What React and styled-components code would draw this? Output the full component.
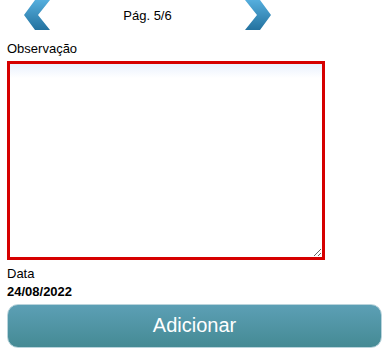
import React from "react"
import styled, { createGlobalStyle } from "styled-components"

const GlobalStyle = createGlobalStyle`
  html, body {
    margin: 0;
    padding: 0;
    background: #fff;
    font-family: "Liberation Sans", Arial, sans-serif;
    color: #000;
  }
`

function Chevron({ dir }) {
  const points = dir === "left"
    ? "11,0 26,0 14,15 26,30 11,30 0,15"
    : "0,0 15,0 26,15 15,30 0,30 12,15"
  const id = "grad-" + dir
  return (
    <svg width="26" height="30" viewBox="0 0 26 30">
      <defs>
        <linearGradient id={id} x1="0" y1="0" x2="0" y2="1">
          <stop offset="0" stopColor="#55aedd" />
          <stop offset="1" stopColor="#24729f" />
        </linearGradient>
      </defs>
      <polygon points={points} fill={`url(#${id})`} />
    </svg>
  )
}

function App() {
  return (
    <>
      <GlobalStyle />
      <Page>
        <Pager>
          <ArrowButton aria-label="anterior">
            <Chevron dir="left" />
          </ArrowButton>
          <PageLabel>Pág. 5/6</PageLabel>
          <ArrowButton aria-label="próxima">
            <Chevron dir="right" />
          </ArrowButton>
        </Pager>
        <Label>Observação</Label>
        <Notes />
        <DateLabel>Data</DateLabel>
        <DateValue>24/08/2022</DateValue>
        <AddButton>Adicionar</AddButton>
      </Page>
    </>
  )
}

const Page = styled.div`
  display: flex;
  flex-direction: column;
  align-items: flex-start;
  padding: 0 2px 0 7px;
  width: 384px;
  box-sizing: border-box;
`

const Pager = styled.div`
  display: grid;
  grid-template-columns: 26px 195px 26px;
  align-items: center;
  height: 30px;
  margin-left: 17px;
`

const ArrowButton = styled.div`
  display: flex;
  width: 26px;
  height: 30px;
  cursor: pointer;
`

const PageLabel = styled.div`
  font-size: 13px;
  line-height: 15px;
  text-align: center;
`

const Label = styled.div`
  font-size: 13px;
  line-height: 15px;
  margin-top: 11px;
`

const Notes = styled.textarea`
  margin: 5px 0 0;
  width: 318px;
  height: 199px;
  box-sizing: border-box;
  border: 3px solid #d60000;
  border-radius: 0;
  outline: none;
  padding: 4px;
  font-family: inherit;
  font-size: 13px;
  background: linear-gradient(#eaf1fd 0, #ffffff 14px, #ffffff 100%);
`

const DateLabel = styled.div`
  font-size: 13px;
  line-height: 15px;
  margin-top: 6px;
`

const DateValue = styled.div`
  font-size: 13px;
  line-height: 15px;
  font-weight: bold;
  margin-top: 3px;
`

const AddButton = styled.button`
  margin-top: 5px;
  width: 375px;
  height: 44px;
  border: 1px solid #b9d4dc;
  border-radius: 11px;
  background: linear-gradient(#5c9fb5, #458a94);
  color: #fff;
  font-family: inherit;
  font-size: 20px;
  line-height: 22px;
  padding: 0 0 2px;
  cursor: pointer;
`

export default App
